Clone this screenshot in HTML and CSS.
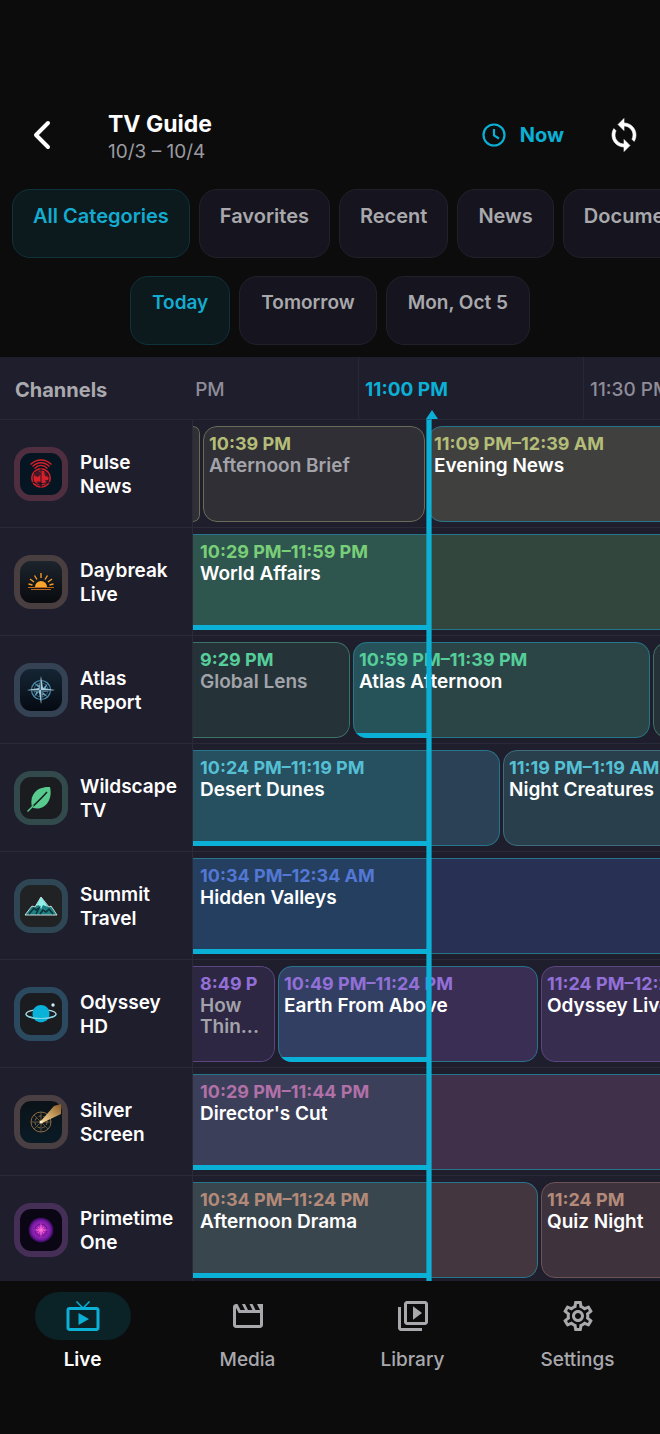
FILE: index.html
```
<!DOCTYPE html>
<html lang="en">
<head>
  <meta charset="UTF-8">
  <meta name="viewport" content="width=device-width, initial-scale=1.0">
  <title>TV Guide</title>
  <link rel="stylesheet" href="styles.css">
</head>
<body>
  <header class="topbar">
    <button class="icon-btn back" aria-label="Back">
      <svg width="36" height="36" viewBox="0 0 36 36"><path d="M24 6 12 18l12 12" fill="none" stroke="#fff" stroke-width="4" stroke-linecap="round" stroke-linejoin="round"/></svg>
    </button>
    <div class="heading">
      <h1>TV Guide</h1>
      <p>10/3 – 10/4</p>
    </div>
    <button class="now-btn">
      <svg width="24" height="24" viewBox="0 0 24 24" fill="none" stroke="currentColor" stroke-width="2.2"><circle cx="12" cy="12" r="10.5"/><path d="M12 6v6.500l5 3"/></svg>
      Now
    </button>
    <button class="icon-btn" aria-label="Refresh">
      <svg width="36" height="36" viewBox="0 0 24 24" fill="#fff" stroke="#fff" stroke-width=".4"><path d="M12 4V1L8 5l4 4V6c3.31 0 6 2.69 6 6 0 1.01-.25 1.97-.7 2.8l1.46 1.46C19.54 15.03 20 13.57 20 12c0-4.42-3.58-8-8-8zm0 14c-3.31 0-6-2.69-6-6 0-1.01.25-1.97.7-2.8L5.24 7.74C4.46 8.97 4 10.43 4 12c0 4.42 3.58 8 8 8v3l4-4-4-4v3z"/></svg>
    </button>
  </header>

  <div class="chips categories">
    <button class="chip active">All Categories</button>
    <button class="chip">Favorites</button>
    <button class="chip">Recent</button>
    <button class="chip">News</button>
    <button class="chip">Documentary</button>
  </div>
  <div class="chips days">
    <button class="chip active">Today</button>
    <button class="chip">Tomorrow</button>
    <button class="chip">Mon, Oct 5</button>
  </div>

  <main class="guide">
    <div class="guide-head">
      <h2>Channels</h2>
      <div class="hours">
        <div class="hours-strip">
          <span>10:30 PM</span>
          <span class="current">11:00 PM</span>
          <span>11:30 PM</span>
        </div>
      </div>
    </div>

    <div class="row pulse">
      <div class="channel">
        <div class="logo">
          <svg viewBox="0 0 42 42">
            <circle cx="21" cy="25" r="10" fill="#d5202b"/>
            <g fill="none" stroke="#061522" stroke-width=".8"><circle cx="21" cy="25" r="8"/><path d="M21 15v20M12 29c5 2 13 2 18 0"/></g>
            <path d="M14 19l5-1 2 3-3 3-3-1zM24 18l4 2 1 4-4-1zM17 28l4 1 1 4-3-1zM25 27l4 0-2 4z" fill="#061522" opacity=".7"/>
            <g fill="none" stroke="#d5202b" stroke-width="1.300"><path d="M10.500 11.500c6-6 15-6 21 0M12.500 13.500c5-5 12-5 17 0M14.500 15.500c4-4 9-4 13 0"/></g>
          </svg>
        </div>
        <h3>Pulse News</h3>
      </div>
      <div class="track">
        <div class="program past cut" style="width:7px"></div>
        <div class="program past" style="width:222px"><time>10:39 PM</time><p>Afternoon Brief</p></div>
        <div class="program live" style="width:675px"><time>11:09 PM–12:39 AM</time><p>Evening News</p></div>
      </div>
    </div>

    <div class="row daybreak">
      <div class="channel">
        <div class="logo">
          <svg viewBox="0 0 42 42">
            <path d="M15 26a6 6 0 0 1 12 0z" fill="#f9a42c"/>
            <path d="M8 26.500h26M11 28.500h20" stroke="#b8651c" stroke-width="1"/>
            <path d="M21 12v5M14.500 14.500l2.500 4M27.500 14.500l-2.500 4M10 18l4 3M32 18l-4 3M8.500 23l4 1M33.500 23l-4 1" stroke="#f09a29" stroke-width="1.400"/>
          </svg>
        </div>
        <h3>Daybreak Live</h3>
      </div>
      <div class="track">
        <div class="program live cut" style="width:608px"><div class="progress" style="width:235px"></div><time>10:29 PM–11:59 PM</time><p>World Affairs</p></div>
      </div>
    </div>

    <div class="row atlas">
      <div class="channel">
        <div class="logo">
          <svg viewBox="0 0 42 42">
            <g fill="none" stroke="#4f8fae"><circle cx="21" cy="21" r="9.500" stroke-width="1.200"/><circle cx="21" cy="21" r="7" stroke-width=".6"/></g>
            <path d="M21 21 14 14l9 4zM21 21l7-7-4 9zM21 21l7 7-9-4zM21 21l-7 7 4-9z" fill="#5fa3c4"/>
            <path d="M21 7l2 12 12 2-12 2-2 12-2-12-12-2 12-2z" fill="#a9c9d8"/>
            <path d="M21 7v14h14l-12 2-2 12V21H7l12 2z" fill="#3e6478"/>
          </svg>
        </div>
        <h3>Atlas Report</h3>
      </div>
      <div class="track">
        <div class="program past cut" style="width:157px"><time>9:29 PM</time><p>Global Lens</p></div>
        <div class="program live" style="width:297px"><div class="progress" style="width:75px"></div><time>10:59 PM–11:39 PM</time><p>Atlas Afternoon</p></div>
        <div class="program past" style="width:222px"></div>
      </div>
    </div>

    <div class="row wildscape">
      <div class="channel">
        <div class="logo">
          <svg viewBox="0 0 42 42">
            <path d="M12 30C9 18 17 9 30 10c3 13-5 24-17 21z" fill="#57cb8d"/>
            <path d="M7.500 34.500C14 28 20 23 27 15" fill="none" stroke="#1b1c20" stroke-width="1.500"/>
            <path d="M7.500 34.500l6-6" stroke="#57cb8d" stroke-width="1.500"/>
          </svg>
        </div>
        <h3>Wildscape TV</h3>
      </div>
      <div class="track">
        <div class="program live cut" style="width:307px"><div class="progress" style="width:235px"></div><time>10:24 PM–11:19 PM</time><p>Desert Dunes</p></div>
        <div class="program" style="width:897px"><time>11:19 PM–1:19 AM</time><p>Night Creatures</p></div>
      </div>
    </div>

    <div class="row summit">
      <div class="channel">
        <div class="logo">
          <svg viewBox="0 0 42 42">
            <path d="M5 30 12 21l3 1 6-10 8 10 2-1 6 9z" fill="#1c7f80" stroke="#c9d8d8"/>
            <path d="M21 12l-5 9 3-1 2 4 2-4 5 2z" fill="#8ff0ea"/>
            <path d="M9 29l5-6 2 2 3-2-3 6M20 29l3-4 3 2 3-3 4 5" fill="none" stroke="#0c3038" stroke-width="1.500"/>
          </svg>
        </div>
        <h3>Summit Travel</h3>
      </div>
      <div class="track">
        <div class="program live cut" style="width:871px"><div class="progress" style="width:235px"></div><time>10:34 PM–12:34 AM</time><p>Hidden Valleys</p></div>
      </div>
    </div>

    <div class="row odyssey">
      <div class="channel">
        <div class="logo">
          <svg viewBox="0 0 42 42">
            <ellipse cx="21" cy="21" rx="15" ry="4.500" fill="none" stroke="#b8dde3" stroke-width="1.200"/>
            <path d="M12.500 21C12.500 9 29.500 9 29.500 21c0 11-17 11-17 0z" fill="#08b2d8"/>
            <path d="M6 21c0 6 30 6 30 0" fill="none" stroke="#7fd4e4" stroke-width="1.200"/>
            <circle cx="33" cy="12" r="1.700" fill="#c5eef5"/>
          </svg>
        </div>
        <h3>Odyssey HD</h3>
      </div>
      <div class="track">
        <div class="program past cut" style="width:82px"><time>8:49 P</time><p>How Thin...</p></div>
        <div class="program live" style="width:260px"><div class="progress" style="width:150px"></div><time>10:49 PM–11:24 PM</time><p>Earth From Above</p></div>
        <div class="program" style="width:447px"><time>11:24 PM–12:24 AM</time><p>Odyssey Live</p></div>
      </div>
    </div>

    <div class="row silver">
      <div class="channel">
        <div class="logo">
          <svg viewBox="0 0 42 42">
            <defs><linearGradient id="beam" x1="0" y1="1" x2="1" y2="0"><stop offset="0" stop-color="#ffe0a0"/><stop offset="1" stop-color="#8a5a22"/></linearGradient></defs>
            <g fill="none" stroke="#8d6c42"><circle cx="21" cy="21" r="10"/><circle cx="21" cy="21" r="6" stroke-dasharray="3 2"/><path d="M21 11v20M11 21h20M14 14l14 14M14 28l14-14" stroke-width=".7"/></g>
            <path d="M20 21 34 5l7-2v10L22 22z" fill="url(#beam)"/>
            <circle cx="21" cy="21" r="1.500" fill="#fff3cf"/>
          </svg>
        </div>
        <h3>Silver Screen</h3>
      </div>
      <div class="track">
        <div class="program live cut" style="width:496px"><div class="progress" style="width:235px"></div><time>10:29 PM–11:44 PM</time><p>Director's Cut</p></div>
      </div>
    </div>

    <div class="row primetime">
      <div class="channel">
        <div class="logo">
          <svg viewBox="0 0 42 42">
            <defs><radialGradient id="orb"><stop offset="0" stop-color="#d535c8"/><stop offset=".75" stop-color="#7a1ba8"/><stop offset="1" stop-color="#2c0a4c"/></radialGradient></defs>
            <circle cx="21" cy="21" r="12.500" fill="url(#orb)"/>
            <circle cx="21" cy="21" r="6" fill="none" stroke="#4d1180" stroke-width=".8"/>
            <path d="M21 13l.8 7.200 7.200.8-7.200.8-.8 7.200-.8-7.200-7.200-.8 7.200-.8z" fill="#ff73d6"/>
            <path d="M18 18l6 6M24 18l-6 6" stroke="#ff73d6" stroke-width=".7"/>
          </svg>
        </div>
        <h3>Primetime One</h3>
      </div>
      <div class="track">
        <div class="program live cut" style="width:345px"><div class="progress" style="width:235px"></div><time>10:34 PM–11:24 PM</time><p>Afternoon Drama</p></div>
        <div class="program" style="width:222px"><time>11:24 PM</time><p>Quiz Night</p></div>
      </div>
    </div>

    <div class="now-line"></div>
  </main>

  <nav class="tabs">
    <a href="#live" class="tab selected">
      <span class="tab-icon"><svg viewBox="0 0 24 24"><path d="M21 6h-7.590l3.290-3.290L16 2l-4 4-4-4-.71.71L10.590 6H3c-1.100 0-2 .89-2 2v12c0 1.100.9 2 2 2h18c1.100 0 2-.9 2-2V8c0-1.110-.9-2-2-2zm0 14H3V8h18v12zM9 10v8l7-4z"/></svg></span>
      Live
    </a>
    <a href="#media" class="tab">
      <span class="tab-icon"><svg viewBox="0 0 24 24"><path d="M18 4l2 4h-3l-2-4h-2l2 4h-3l-2-4H8l2 4H7L5 4H4c-1.100 0-2 .9-2 2v12c0 1.100.9 2 2 2h16c1.100 0 2-.9 2-2V4h-4zm2 14H4V6.470L5.760 10H20v8z"/></svg></span>
      Media
    </a>
    <a href="#library" class="tab">
      <span class="tab-icon"><svg viewBox="0 0 24 24"><path d="M4 6H2v14c0 1.100.9 2 2 2h14v-2H4V6zm16-4H8c-1.100 0-2 .9-2 2v12c0 1.100.9 2 2 2h12c1.100 0 2-.9 2-2V4c0-1.100-.9-2-2-2zm0 14H8V4h12v12zM12 5.500v9l6-4.500z"/></svg></span>
      Library
    </a>
    <a href="#settings" class="tab">
      <span class="tab-icon"><svg viewBox="0 0 24 24"><path d="M19.43 12.98c.04-.32.07-.64.07-.98 0-.34-.03-.66-.07-.98l2.11-1.65c.19-.15.24-.42.12-.64l-2-3.46c-.09-.16-.26-.25-.44-.25-.06 0-.12.01-.17.03l-2.49 1c-.52-.4-1.08-.73-1.69-.98l-.38-2.65C14.46 2.18 14.25 2 14 2h-4c-.25 0-.46.18-.49.42l-.38 2.65c-.61.25-1.17.59-1.69.98l-2.49-1c-.06-.02-.12-.03-.18-.03-.17 0-.34.09-.43.25l-2 3.46c-.13.22-.07.49.12.64l2.11 1.65c-.04.32-.07.65-.07.98 0 .33.03.66.07.98l-2.11 1.65c-.19.15-.24.42-.12.64l2 3.46c.09.16.26.25.44.25.06 0 .12-.01.17-.03l2.49-1c.52.4 1.08.73 1.69.98l.38 2.65c.03.24.24.42.49.42h4c.25 0 .46-.18.49-.42l.38-2.65c.61-.25 1.17-.59 1.69-.98l2.49 1c.06.02.12.03.18.03.17 0 .34-.09.43-.25l2-3.46c.12-.22.07-.49-.12-.64l-2.11-1.65zm-1.98-1.71c.04.31.05.52.05.73 0 .21-.02.43-.05.73l-.14 1.13.89.7 1.08.84-.7 1.21-1.27-.51-1.04-.42-.9.68c-.43.32-.84.56-1.25.73l-1.06.43-.16 1.13-.2 1.35h-1.4l-.19-1.35-.16-1.13-1.06-.43c-.43-.18-.83-.41-1.23-.71l-.91-.7-1.06.43-1.27.51-.7-1.21 1.08-.84.89-.7-.14-1.13c-.03-.31-.05-.54-.05-.74s.02-.43.05-.73l.14-1.13-.89-.7-1.08-.84.7-1.21 1.27.51 1.04.42.9-.68c.43-.32.84-.56 1.25-.73l1.06-.43.16-1.13.2-1.35h1.39l.19 1.35.16 1.13 1.06.43c.43.18.83.41 1.23.71l.91.7 1.06-.43 1.27-.51.7 1.21-1.07.85-.89.7.14 1.13zM12 8c-2.21 0-4 1.79-4 4s1.79 4 4 4 4-1.79 4-4-1.79-4-4-4zm0 6c-1.1 0-2-.9-2-2s.9-2 2-2 2 .9 2 2-.9 2-2 2z"/></svg></span>
      Settings
    </a>
  </nav>
</body>
</html>
```

FILE: styles.css
```
* {
  box-sizing: border-box;
}
body {
  margin: 0;
  height: 100vh;
  display: flex;
  flex-direction: column;
  overflow: hidden;
  background-color: #0c0c0d;
  color: #fff;
  font-family: Inter, sans-serif;
  font-size: 19px;
  line-height: 24px;
}
h1, h2, h3, p {
  margin: 0;
}
button {
  font: inherit;
  color: inherit;
  background: none;
  border: none;
  padding: 0;
  cursor: pointer;
}
svg {
  display: block;
}

/* Top bar */
.topbar {
  display: flex;
  align-items: center;
  padding: 107px 18px 26px 24px;
}
.icon-btn {
  width: 36px;
  height: 36px;
}
.heading {
  flex: 1;
  margin-left: 48px;
}
.heading h1 {
  font-size: 23px;
  font-weight: 700;
  line-height: 34px;
}
.heading p {
  color: #9b9ba0;
  line-height: 22px;
}
.now-btn {
  display: flex;
  align-items: center;
  gap: 14px;
  margin-right: 42px;
  color: #0bb0d6;
  font-size: 20px;
  font-weight: 700;
}

/* Filter chips */
.chips {
  display: flex;
  gap: 9px;
  padding: 0 12px;
  overflow: hidden;
}
.days {
  justify-content: center;
  padding: 18px 12px 12px;
}
.chip {
  flex: none;
  padding: 14px 21px 29px;
  border: 1px solid #22212a;
  border-radius: 18px;
  background-color: #16151f;
  color: #a9a9ad;
  font-weight: 600;
  white-space: nowrap;
}
.categories .chip {
  padding: 14px 20px 29px;
  font-size: 20px;
}
.chip.active {
  background-color: #0c191d;
  border-color: #0f333b;
  color: #13acd0;
}

/* Guide grid */
.guide {
  position: relative;
  flex: 1;
  min-height: 0;
  overflow: hidden;
  background-color: #1f1e2d;
}
.guide-head {
  display: flex;
  height: 63px;
  border-bottom: 1px solid #282736;
}
.guide-head h2 {
  flex: none;
  width: 193px;
  padding: 21px 0 0 15px;
  color: #a9a9ae;
  font-size: 20px;
  font-weight: 700;
}
.hours {
  flex: 1;
  overflow: hidden;
}
.hours-strip {
  display: flex;
  margin-left: -60px;
}
.hours-strip span {
  flex: none;
  width: 225px;
  height: 62px;
  padding: 21px 6px 0;
  border-left: 1px solid #282736;
  color: #8e8d98;
  font-weight: 500;
}
.hours-strip .current {
  color: #0bb0d6;
  font-weight: 700;
}
.row {
  display: flex;
  height: 108px;
  border-bottom: 1px solid #2b2a38;
}
.channel {
  flex: none;
  display: flex;
  align-items: center;
  gap: 12px;
  width: 193px;
  padding: 0 12px 0 14px;
  border-right: 1px solid #2b2a38;
}
.channel h3 {
  padding-top: 3px;
  font-size: 19px;
  font-weight: 600;
}
.logo {
  flex: none;
  width: 54px;
  height: 54px;
  border: 6px solid var(--ring);
  border-radius: 17px;
  background: var(--tile);
  background-clip: padding-box;
}
.track {
  flex: 1;
  display: flex;
  gap: 3px;
  padding: 6px 0 5px;
  overflow: hidden;
}
.program {
  position: relative;
  flex: none;
  padding: 7px 6px;
  overflow: hidden;
  border-radius: 14px;
  background-color: var(--fill);
}
.program::after {
  content: "";
  position: absolute;
  inset: 0;
  border: 1px solid var(--edge);
  border-radius: inherit;
}
.program.past {
  background-color: var(--past);
}
.program.past p {
  color: #a3a3aa;
}
.program.live {
  --edge: #26758a;
  background-color: var(--live);
}
.program.cut {
  padding-left: 7px;
  border-radius: 0 14px 14px 0;
}
.program.cut::after {
  border-left: none;
}
.program:empty {
  padding: 0;
}
.program time {
  position: relative;
  display: block;
  overflow: hidden;
  color: var(--time);
  font-size: 18px;
  font-weight: 700;
  line-height: 22px;
  white-space: nowrap;
}
.program p {
  position: relative;
  font-size: 19px;
  font-weight: 600;
  line-height: 21px;
}
.progress {
  position: absolute;
  top: 0;
  bottom: 0;
  left: 0;
  background-color: var(--played);
}
.progress::after {
  content: "";
  position: absolute;
  left: 0;
  right: 0;
  bottom: 0;
  z-index: 1;
  height: 5px;
  background-color: #0bb0d6;
}

.pulse { --ring: #4f2e40; --tile: #061522; --time: #b4bd78; --past: #2f2f35; --live: #40413f; --edge: #6a6c5a; }
.daybreak { --ring: #4a3f40; --tile: linear-gradient(#1c242c, #090b0e); --time: #79cf77; --live: #33463d; --played: #2f554f; }
.atlas { --ring: #344253; --tile: linear-gradient(#152534, #050a12); --time: #55ce9a; --past: #253339; --live: #2b4547; --played: #265359; --edge: #3d7366; }
.wildscape { --ring: #334a4c; --tile: #1b1c20; --time: #55bfd4; --fill: #2a3f4c; --live: #2b4155; --played: #264f60; --edge: #3f6c7f; }
.summit { --ring: #2f4654; --tile: #212223; --time: #5377d4; --live: #283054; --played: #243f60; }
.odyssey { --ring: #2c4a5f; --tile: #1b1c20; --time: #9270d8; --fill: #372d4f; --past: #2d2743; --live: #3a2e55; --played: #333f62; --edge: #5b467f; }
.silver { --ring: #4a4043; --tile: linear-gradient(#0b1218, #0a1b26); --time: #b171a8; --live: #40304a; --played: #3b3f59; }
.primetime { --ring: #452f56; --tile: #0a0614; --time: #b38a79; --fill: #3e333c; --live: #44363e; --played: #3a464e; --edge: #6e5356; }

/* Current time marker */
.now-line {
  position: absolute;
  top: 63px;
  bottom: 0;
  left: 427px;
  z-index: 2;
  width: 4px;
  background-color: #0bb0d6;
  box-shadow: 0 0 0 1px rgba(11, 176, 214, 0.6);
}
.now-line::before {
  content: "";
  position: absolute;
  top: -10px;
  left: -1px;
  border: 6px solid transparent;
  border-top: none;
  border-bottom: 9px solid #0bb0d6;
}

/* Bottom tabs */
.tabs {
  display: flex;
  padding: 11px 0 62px;
}
.tab {
  flex: 1;
  display: flex;
  flex-direction: column;
  align-items: center;
  gap: 8px;
  color: #a9a9ad;
  font-weight: 500;
  text-decoration: none;
}
.tab-icon {
  padding: 6px 30px;
  border-radius: 24px;
}
.tab-icon svg {
  width: 36px;
  height: 36px;
  fill: currentColor;
}
.tab.selected {
  color: #fff;
  font-weight: 600;
}
.tab.selected .tab-icon {
  background-color: #0b2226;
  color: #0bb0d6;
}
```
